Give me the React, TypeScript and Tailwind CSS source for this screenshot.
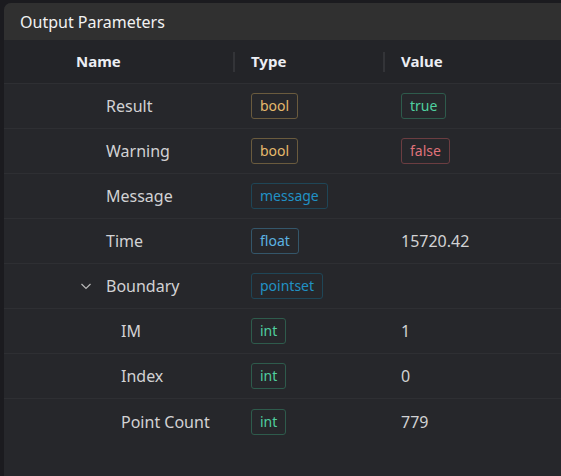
const FONT = "font-['Segoe_UI','Noto_Sans',sans-serif]";

type Tone = 'bool' | 'green' | 'red' | 'msg' | 'float';

const TONES: Record<Tone, string> = {
  bool: 'text-[#e5b96c] border-[#6a5b3e]',
  green: 'text-[#4fcf9f] border-[#2e5b4c]',
  red: 'text-[#df727a] border-[#6b3d41]',
  msg: 'text-[#2191c4] border-[#1f4657]',
  float: 'text-[#5bb2e2] border-[#34566a]',
};

interface Row {
  name: string;
  level: 1 | 2;
  type: string;
  tone: Tone;
  value?: string;
  valueTone?: Tone;
  expander?: boolean;
}

const ROWS: Row[] = [
  { name: 'Result', level: 1, type: 'bool', tone: 'bool', value: 'true', valueTone: 'green' },
  { name: 'Warning', level: 1, type: 'bool', tone: 'bool', value: 'false', valueTone: 'red' },
  { name: 'Message', level: 1, type: 'message', tone: 'msg' },
  { name: 'Time', level: 1, type: 'float', tone: 'float', value: '15720.42' },
  { name: 'Boundary', level: 1, type: 'pointset', tone: 'msg', expander: true },
  { name: 'IM', level: 2, type: 'int', tone: 'green', value: '1' },
  { name: 'Index', level: 2, type: 'int', tone: 'green', value: '0' },
  { name: 'Point Count', level: 2, type: 'int', tone: 'green', value: '779' },
];

function Badge({ label, tone }: { label: string; tone: Tone }) {
  return (
    <span
      className={`inline-flex h-[26px] items-center rounded-[3px] border px-[8px] text-[14px] leading-none ${TONES[tone]}`}
    >
      {label}
    </span>
  );
}

function Chevron() {
  return (
    <svg width="12" height="12" viewBox="0 0 12 12" className="text-[#b8b8b8]">
      <path d="M1.5 4 L6 8.5 L10.5 4" fill="none" stroke="currentColor" strokeWidth="1.2" />
    </svg>
  );
}

export default function App() {
  return (
    <div className={`h-[476px] w-[561px] overflow-hidden bg-[#1b1b1f] pl-[4px] pt-[3px] ${FONT}`}>
      <div className="flex h-full flex-col overflow-hidden rounded-tl-[7px] bg-[#26272b]">
        {/* Panel title */}
        <div className="flex h-[37px] shrink-0 items-center bg-[#303030] pl-[16px] text-[16px] text-[#f2f2f2]">
          Output Parameters
        </div>

        {/* Column headers */}
        <div className="grid h-[44px] shrink-0 grid-cols-[231px_150px_1fr] items-center border-b border-[#2e2f33] bg-[#232428] text-[15px] font-bold text-[#eceef4]">
          <div className="relative flex h-full items-center pl-[72px]">
            Name
            <span className="absolute right-0 top-[12px] h-[20px] w-[2px] bg-[#333438]" />
          </div>
          <div className="relative flex h-full items-center pl-[16px]">
            Type
            <span className="absolute right-0 top-[12px] h-[20px] w-[2px] bg-[#333438]" />
          </div>
          <div className="flex h-full items-center pl-[16px]">Value</div>
        </div>

        {/* Rows */}
        {ROWS.map((row, i) => (
          <div
            key={row.name}
            className={`grid h-[45px] shrink-0 grid-cols-[231px_150px_1fr] items-center text-[#d2d2d4] ${
              i < ROWS.length - 1 ? 'border-b border-[#2e2f33]' : ''
            }`}
          >
            <div
              className={`relative flex items-center text-[16px] ${row.level === 1 ? 'pl-[102px]' : 'pl-[117px]'}`}
            >
              {row.expander && (
                <span className="absolute left-[76px] top-1/2 flex -translate-y-1/2 items-center">
                  <Chevron />
                </span>
              )}
              {row.name}
            </div>
            <div className="flex items-center pl-[16px]">
              <Badge label={row.type} tone={row.tone} />
            </div>
            <div className="flex items-center pl-[16px] text-[16px]">
              {row.value && row.valueTone ? (
                <Badge label={row.value} tone={row.valueTone} />
              ) : (
                row.value
              )}
            </div>
          </div>
        ))}
      </div>
    </div>
  );
}
